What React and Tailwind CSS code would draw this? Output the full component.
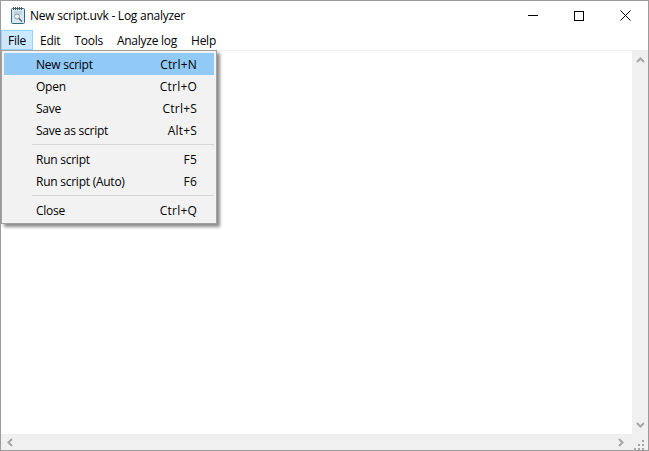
import { Fragment } from "react";

const menus = ["Edit", "Tools", "Analyze log", "Help"];

const items = [
  [
    { label: "New script", keys: "Ctrl+N", active: true },
    { label: "Open", keys: "Ctrl+O" },
    { label: "Save", keys: "Ctrl+S" },
    { label: "Save as script", keys: "Alt+S" },
  ],
  [
    { label: "Run script", keys: "F5" },
    { label: "Run script (Auto)", keys: "F6" },
  ],
  [{ label: "Close", keys: "Ctrl+Q" }],
];

function AppIcon() {
  return (
    <svg width="16" height="18" viewBox="0 0 16 18" fill="none">
      <rect x="1.5" y="1.5" width="13" height="15" rx="1" fill="#d6eaf3" stroke="#2f6a80" />
      <path d="M3.5 0v3M5.5 0v3M7.5 0v3M9.5 0v3M11.5 0v3" stroke="#555" />
      <path d="M4 5h8M4 7h8" stroke="#aebfc8" />
      <circle cx="7" cy="9.5" r="2.5" fill="#f6fafc" stroke="#8c9aa2" />
      <path d="M9 11.5l3 3" stroke="#56666f" strokeWidth="1.5" />
    </svg>
  );
}

function MenuRow({ label, keys, active }) {
  return (
    <div className={`flex h-[22px] items-center justify-between pl-8 pr-[17px] pt-px ${active ? "bg-[#91c9f7]" : ""}`}>
      <span>{label}</span>
      <span className="tracking-[0.2px]">{keys}</span>
    </div>
  );
}

export default function App() {
  return (
    <div className="relative flex h-[451px] w-[649px] flex-col overflow-hidden border border-[#9b9b9b] bg-white font-['Open_Sans',sans-serif] text-xs tracking-[-0.25px] text-black">
      {/* title bar */}
      <div className="flex h-[29px] shrink-0 items-center">
        <div className="ml-[9px] mr-[4px] flex w-4 justify-center">
          <AppIcon />
        </div>
        <span className="pt-px">New script.uvk - Log analyzer</span>
        <div className="ml-auto flex items-center">
          <div className="flex h-[29px] w-[46px] items-center justify-center">
            <div className="h-px w-[10px] bg-black" />
          </div>
          <div className="flex h-[29px] w-[46px] items-center justify-center">
            <div className="h-[10px] w-[10px] border border-black" />
          </div>
          <div className="flex h-[29px] w-[46px] items-center justify-center">
            <svg width="11" height="11" viewBox="0 0 11 11" stroke="#000" fill="none">
              <path d="M.5.5l10 10M10.5.5l-10 10" />
            </svg>
          </div>
        </div>
      </div>

      {/* menu bar */}
      <div className="flex h-[20px] shrink-0 items-center">
        <div className="flex h-[20px] w-[32px] items-center justify-center border border-[#99d1ff] bg-[#cce8ff] pt-px">File</div>
        {menus.map((m) => (
          <div key={m} className="px-[7px] pt-[2px]">{m}</div>
        ))}
      </div>

      {/* editor + scrollbars */}
      <div className="flex min-h-0 flex-1 flex-col border-t border-[#f0f0f0]">
        <div className="flex min-h-0 flex-1">
          <div className="flex-1" />
          <div className="flex w-[16px] flex-col items-center justify-between bg-[#f0f0f0] py-[6px]">
            <svg width="9" height="6" viewBox="0 0 9 6" stroke="#a6a6a6" strokeWidth="2" fill="none">
              <path d="M1 5l3.5-3.5L8 5" />
            </svg>
            <svg width="9" height="6" viewBox="0 0 9 6" stroke="#a6a6a6" strokeWidth="2" fill="none">
              <path d="M1 1l3.5 3.5L8 1" />
            </svg>
          </div>
        </div>
        <div className="flex h-[16px] shrink-0 items-center bg-[#f0f0f0]">
          <svg className="ml-[6px]" width="6" height="9" viewBox="0 0 6 9" stroke="#a6a6a6" strokeWidth="2" fill="none">
            <path d="M5 1L1.5 4.5 5 8" />
          </svg>
          <svg className="ml-auto mr-[10px]" width="6" height="9" viewBox="0 0 6 9" stroke="#a6a6a6" strokeWidth="2" fill="none">
            <path d="M1 1l3.5 3.5L1 8" />
          </svg>
          <svg className="mr-[2px] self-end" width="12" height="12" viewBox="0 0 12 12" fill="#a6a6a6">
            <path d="M8 2h2v2H8zM4 6h2v2H4zM8 6h2v2H8zM0 10h2v2H0zM4 10h2v2H4zM8 10h2v2H8z" />
          </svg>
        </div>
      </div>

      {/* open File menu */}
      <div className="absolute left-0 top-[49px] w-[216px] border border-[#a0a0a0] bg-[#f2f2f2] p-[2px] shadow-[3px_3px_3px_rgba(0,0,0,0.45)]">
        {items.map((group, i) => (
          <Fragment key={i}>
            {i > 0 && <div className="my-[3px] ml-[28px] h-px bg-[#d7d7d7]" />}
            {group.map((it) => (
              <MenuRow key={it.label} {...it} />
            ))}
          </Fragment>
        ))}
      </div>
    </div>
  );
}
